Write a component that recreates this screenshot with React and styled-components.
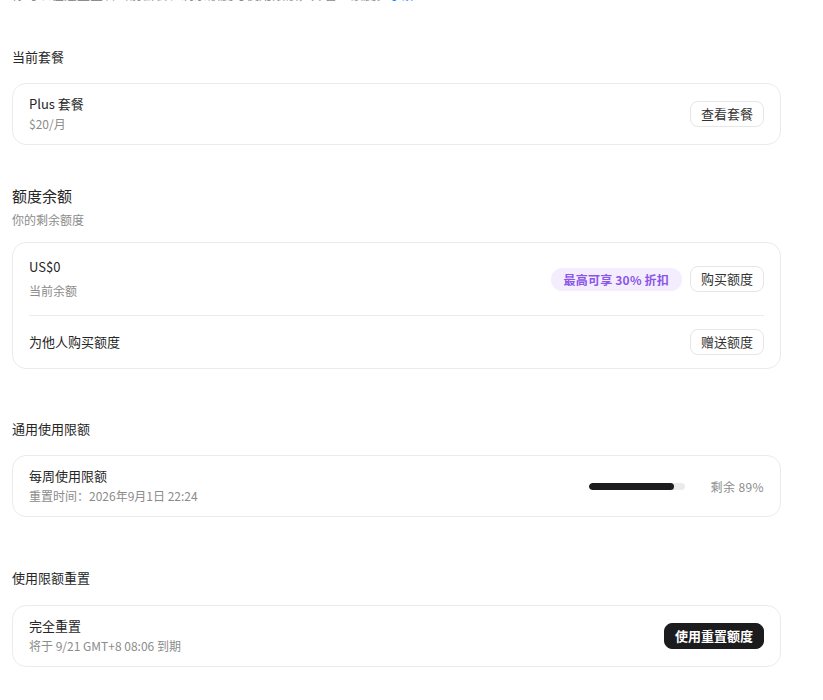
import React from "react";
import styled, { createGlobalStyle } from "styled-components";

const GlobalStyle = createGlobalStyle`
  html, body {
    margin: 0;
    padding: 0;
    background: #ffffff;
    overflow: hidden;
  }
  body {
    font-family: "Noto Sans CJK SC", "Noto Sans", sans-serif;
    color: #262626;
    -webkit-font-smoothing: antialiased;
  }
`;

const Page = styled.div`
  width: 769px;
  padding: 0 12px;
  display: flex;
  flex-direction: column;
`;

const Intro = styled.p`
  margin: -16px 0 0;
  font-size: 13px;
  line-height: 20px;
  color: #8c8c8c;
  white-space: nowrap;
`;

const IntroLink = styled.a`
  color: #1a8cff;
  text-decoration: none;
`;

const Section = styled.section`
  display: flex;
  flex-direction: column;
  margin-top: ${(p) => p.$top}px;
`;

const Heading = styled.h2`
  margin: 0;
  font-size: ${(p) => (p.$large ? 15 : 13)}px;
  line-height: ${(p) => (p.$large ? 22 : 20)}px;
  font-weight: 400;
  color: #262626;
`;

const SubHeading = styled.div`
  margin-top: 4px;
  font-size: 12px;
  line-height: 18px;
  color: #8c8c8c;
`;

const Card = styled.div`
  margin-top: ${(p) => p.$gap}px;
  border: 1px solid #ebebeb;
  border-radius: 14px;
  padding: 0 16px;
  display: flex;
  flex-direction: column;
`;

const Row = styled.div`
  display: flex;
  align-items: center;
  justify-content: space-between;
  padding: ${(p) => p.$pad}px 0;
  & + & {
    border-top: 1px solid #ebebeb;
  }
`;

const Texts = styled.div`
  display: flex;
  flex-direction: column;
  gap: ${(p) => p.$gap || 0}px;
`;

const Title = styled.div`
  font-size: 13px;
  line-height: 20px;
  color: #262626;
`;

const Meta = styled.div`
  font-size: 12px;
  line-height: 20px;
  color: #8c8c8c;
`;

const Actions = styled.div`
  display: flex;
  align-items: center;
  gap: 8px;
`;

const Button = styled.button`
  height: 26px;
  padding: 0 10px;
  border-radius: 8px;
  font-family: inherit;
  font-size: 13px;
  line-height: 24px;
  cursor: pointer;
  border: 1px solid ${(p) => (p.$primary ? "#1c1c1e" : "#e6e6e6")};
  background: ${(p) => (p.$primary ? "#1c1c1e" : "#ffffff")};
  color: ${(p) => (p.$primary ? "#ffffff" : "#333333")};
  font-weight: ${(p) => (p.$primary ? 600 : 400)};
`;

const Badge = styled.span`
  height: 23px;
  padding: 0 13px;
  border-radius: 999px;
  background: #f3edfe;
  color: #8b55e8;
  font-size: 12px;
  font-weight: 600;
  line-height: 23px;
  letter-spacing: 0.2px;
  white-space: nowrap;
`;

const Usage = styled.div`
  display: flex;
  align-items: center;
  gap: 26px;
`;

const Track = styled.div`
  width: 96px;
  height: 7px;
  border-radius: 999px;
  background: #ebebeb;
  overflow: hidden;
`;

const Fill = styled.div`
  height: 100%;
  border-radius: 999px;
  background: #1c1c1e;
`;

const UsageText = styled.span`
  font-size: 12px;
  color: #8c8c8c;
  letter-spacing: 0.4px;
  white-space: nowrap;
`;

export default function App() {
  const remaining = 89;
  return (
    <>
      <GlobalStyle />
      <Page>
        <Intro>
          你可以在这里查看当前套餐、剩余额度与使用限额，并管理额度。
          <IntroLink href="#">了解</IntroLink>
        </Intro>

        <Section $top={43}>
          <Heading>当前套餐</Heading>
          <Card $gap={16}>
            <Row $pad={10}>
              <Texts>
                <Title>Plus 套餐</Title>
                <Meta>$20/月</Meta>
              </Texts>
              <Button>查看套餐</Button>
            </Row>
          </Card>
        </Section>

        <Section $top={40}>
          <Heading $large>额度余额</Heading>
          <SubHeading>你的剩余额度</SubHeading>
          <Card $gap={13}>
            <Row $pad={14}>
              <Texts $gap={4}>
                <Title>US$0</Title>
                <Meta>当前余额</Meta>
              </Texts>
              <Actions>
                <Badge>最高可享 30% 折扣</Badge>
                <Button>购买额度</Button>
              </Actions>
            </Row>
            <Row $pad={13}>
              <Title>为他人购买额度</Title>
              <Button>赠送额度</Button>
            </Row>
          </Card>
        </Section>

        <Section $top={50}>
          <Heading>通用使用限额</Heading>
          <Card $gap={16}>
            <Row $pad={10}>
              <Texts>
                <Title>每周使用限额</Title>
                <Meta>重置时间：2026年9月1日 22:24</Meta>
              </Texts>
              <Usage>
                <Track>
                  <Fill style={{ width: `${remaining}%` }} />
                </Track>
                <UsageText>剩余 {remaining}%</UsageText>
              </Usage>
            </Row>
          </Card>
        </Section>

        <Section $top={51}>
          <Heading>使用限额重置</Heading>
          <Card $gap={17}>
            <Row $pad={10}>
              <Texts>
                <Title>完全重置</Title>
                <Meta>将于 9/21 GMT+8 08:06 到期</Meta>
              </Texts>
              <Button $primary>使用重置额度</Button>
            </Row>
          </Card>
        </Section>
      </Page>
    </>
  );
}
